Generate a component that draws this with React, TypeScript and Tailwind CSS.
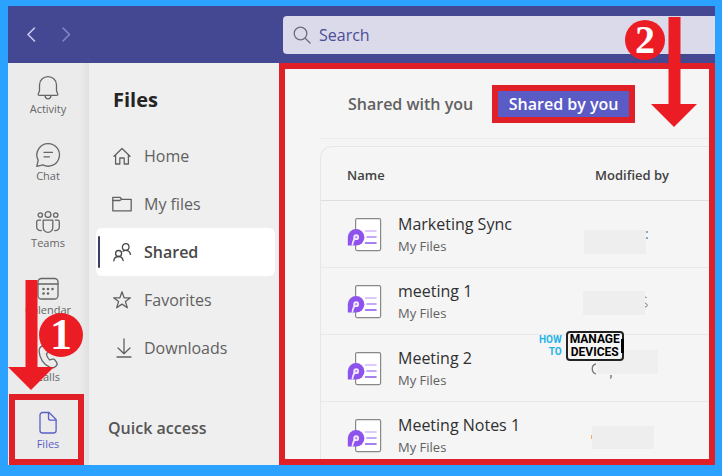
import type { ReactNode } from "react";

const FONT = "font-['Open_Sans','Noto_Sans',sans-serif]";

type Entry = { label: string; icon: ReactNode };

function Icon({ children, size = 24 }: { children: ReactNode; size?: number }) {
  return (
    <svg
      width={size}
      height={size}
      viewBox={`0 0 ${size} ${size}`}
      fill="none"
      stroke="currentColor"
      strokeWidth="1.3"
      strokeLinecap="round"
      strokeLinejoin="round"
      aria-hidden="true"
      className="shrink-0 overflow-visible"
    >
      {children}
    </svg>
  );
}

const rail: Entry[] = [
  {
    label: "Activity",
    icon: (
      <Icon size={26}>
        <path d="M4.4 20.4c-1 0-1.500-.8-1.100-1.700l1.200-3V10c0-4.700 3.700-8.300 8.500-8.300s8.500 3.600 8.500 8.300v5.700l1.200 3c.4.9-.1 1.700-1.100 1.700z" />
        <path d="M10 20.600c.2 1.900 1.400 3.200 3 3.200s2.800-1.300 3-3.200" />
      </Icon>
    ),
  },
  {
    label: "Chat",
    icon: (
      <Icon size={26}>
        <path d="M13.200 1.600a11.300 11.300 0 1 1-5.300 21.300L1.800 24.300l1.400-6.100A11.300 11.300 0 0 1 13.200 1.600z" />
        <path d="M9 10.300h8.500M9 14.800h5.500" />
      </Icon>
    ),
  },
  {
    label: "Teams",
    icon: (
      <Icon size={26}>
        <circle cx="13" cy="5.500" r="2.900" />
        <circle cx="5.300" cy="6" r="2.200" />
        <circle cx="20.700" cy="6" r="2.200" />
        <path d="M8.200 11.200h9.600v7.300a4.800 4.800 0 0 1-9.600 0z" />
        <path d="M5.600 11.200H3.400c-1 0-1.700.7-1.700 1.700v5a3.700 3.700 0 0 0 4.500 3.600M20.400 11.200h2.200c1 0 1.700.7 1.700 1.700v5a3.700 3.700 0 0 1-4.500 3.600" />
      </Icon>
    ),
  },
  {
    label: "Calendar",
    icon: (
      <Icon size={26}>
        <rect x="3" y="2.500" width="20" height="20.500" rx="3.500" />
        <path d="M3 8h20" />
        <g fill="currentColor" stroke="none">
          <circle cx="8.500" cy="13" r="1.300" />
          <circle cx="13" cy="13" r="1.300" />
          <circle cx="17.500" cy="13" r="1.300" />
          <circle cx="8.500" cy="17.500" r="1.300" />
          <circle cx="13" cy="17.500" r="1.300" />
        </g>
      </Icon>
    ),
  },
  {
    label: "Calls",
    icon: (
      <Icon size={26}>
        <path d="M7.700 2.800 10 2.100c1.300-.4 2.500.3 3 1.500l1 2.500c.4 1 .1 2-.6 2.800l-2 1.900c.2 2.300 1.600 4.700 3.300 6.200l2.700-.8c1-.3 2.100.1 2.700 1l1.500 2.100c.8 1.100.7 2.500-.3 3.400l-.8.700c-1.500 1.400-3.600 1.900-5.500 1C8.500 21.700 4.500 15 4.100 8.200c-.1-2.500 1.300-4.700 3.600-5.400z" />
      </Icon>
    ),
  },
  {
    label: "Files",
    icon: (
      <Icon size={26}>
        <path d="M7.500 2.500h6.600l7 7v11c0 1.600-1 2.500-2.500 2.500H7.500C6 23 5 22.100 5 20.500V5c0-1.600 1-2.500 2.500-2.500z" />
        <path d="M13.500 2.800v5.100c0 1.500.8 2.300 2.300 2.300h5" />
      </Icon>
    ),
  },
];

const folders: Entry[] = [
  {
    label: "Home",
    icon: (
      <Icon size={20}>
        <path d="M2 10.300 10 2.500l8 7.800M3.600 9V18h4.200v-6h4.400v6h4.200V9" />
      </Icon>
    ),
  },
  {
    label: "My files",
    icon: (
      <Icon size={20}>
        <path d="M.8 3.300h7l2 2h9.400v11.500H.8z" />
        <path d="M.8 6.500h7l2-1.200" />
      </Icon>
    ),
  },
  {
    label: "Shared",
    icon: (
      <Icon size={20}>
        <circle cx="13.700" cy="5" r="3.300" />
        <circle cx="6.600" cy="11.500" r="3" />
        <path d="M1.800 18.800c.3-2.500 2.200-4.300 4.800-4.300 2.300 0 4.100 1.600 4.500 4M11 9.200c.8-.6 1.700-.9 2.700-.9 2.500 0 4.300 1.600 4.700 4" />
      </Icon>
    ),
  },
  {
    label: "Favorites",
    icon: (
      <Icon size={20}>
        <path d="m10 1.800 2.100 6h6.300l-5 3.800 1.900 6.200-5.300-3.700-5.300 3.700 1.900-6.200-5-3.800h6.300z" />
      </Icon>
    ),
  },
  {
    label: "Downloads",
    icon: (
      <Icon size={20}>
        <path d="M12 1v14.500M6 10l6 5.700 6-5.700M5 19h14" />
      </Icon>
    ),
  },
];

/* Hidden author names: a grey patch with what still shows round its edge. */
const files: { name: string; author: ReactNode }[] = [
  {
    name: "Marketing Sync",
    author: (
      <>
        <path fill="#eeeeee" d="M1 29h62v24H1z" />
        <path fill="#8aa6c8" d="M63 30h2v2h-2zM63 36h2v2h-2z" />
      </>
    ),
  },
  {
    name: "meeting 1",
    author: (
      <>
        <path fill="#eeeeee" d="M0 23h62v24H0z" />
        <path d="M62 29c1 0 2 1 2 1M62 35c3 1 3 4 0 4" stroke="#6b7684" fill="none" />
      </>
    ),
  },
  {
    name: "Meeting 2",
    author: (
      <>
        <path fill="#efefef" d="M14 15h61v24H14z" />
        <path d="M13 29c-5 1-5 8 0 10" stroke="#777777" fill="none" strokeWidth="1.300" />
        <path d="M27 40h2v2l-1 2h-1z" fill="#999999" />
      </>
    ),
  },
  {
    name: "Meeting Notes 1",
    author: (
      <>
        <path fill="#eeeeee" d="M9 24h62v23H9z" />
        <path fill="#efb160" d="M8 33h1v4H8z" />
      </>
    ),
  },
];

function LoopIcon() {
  return (
    <svg width="36" height="36" viewBox="0 0 36 36" aria-hidden="true" className="shrink-0">
      <rect x="8.600" y="2.600" width="25" height="32" rx="1.500" fill="#ffffff" stroke="#8a8886" strokeWidth="1.200" />
      <path d="M18.500 15h10.500" stroke="#d3b9fb" strokeWidth="1.600" strokeLinecap="round" />
      <path d="M20 21h9" stroke="#b18bf5" strokeWidth="1.600" strokeLinecap="round" />
      <path d="M18.500 27h10.500" stroke="#8b57ea" strokeWidth="1.600" strokeLinecap="round" />
      <path d="M.8 29.500V21.300A8.300 8.300 0 1 1 9.100 29.600z" fill="#8e53ec" />
      <path d="M9.200 18.300a2.900 2.900 0 0 1 0 5.800H8c-.9 1.600-1.500 3.200-1.800 5.400H4.600c.2-3 1.100-5.200 1.700-6.500v-1.800a2.900 2.900 0 0 1 2.900-2.900z" fill="#f1e8ff" />
      <circle cx="9.200" cy="21.200" r="1.100" fill="#b18bf5" />
    </svg>
  );
}

function DownArrow() {
  return (
    <svg width="46" height="110" viewBox="0 0 46 110" aria-hidden="true" className="block">
      <path d="M17.500 0h12v87H46L23 110 0 87h17.500z" fill="#ec1c24" />
    </svg>
  );
}

export default function App() {
  return (
    <div className={`relative flex h-screen min-h-[476px] flex-col overflow-hidden bg-[#2ba2ff] pt-1.5 pr-[7px] pb-[11px] pl-2 text-[#616161] ${FONT}`}>
      <header className="flex h-[57px] shrink-0 items-center bg-[#444791]">
        <div className="flex w-[275px] shrink-0 gap-5 pl-4">
          <button aria-label="Back" className="text-[#c9caf0]">
            <Icon size={15}>
              <path d="M10.500 1 4 7.500l6.500 6.500" strokeWidth="1.600" />
            </Icon>
          </button>
          <button aria-label="Forward" className="text-[#8385c6]">
            <Icon size={15}>
              <path d="M4 1l6.500 6.500L4 14" strokeWidth="1.600" />
            </Icon>
          </button>
        </div>
        <label className="flex h-[38px] min-w-0 flex-1 items-center gap-2 rounded-l bg-[#dbdaea] pl-2.5 text-[#6c6b80]">
          <Icon size={18}>
            <circle cx="7.500" cy="7.500" r="6.300" />
            <path d="m12.200 12.200 4.800 4.800" />
          </Icon>
          <input
            type="search"
            aria-label="Search"
            placeholder="Search"
            className="min-w-0 flex-1 bg-transparent text-base text-[#444791] outline-none placeholder:text-[#4b4d97] placeholder:opacity-100"
          />
        </label>
      </header>

      <div className="flex min-h-0 flex-1">
        <nav aria-label="Apps" className="w-[81px] shrink-0 bg-[linear-gradient(to_right,#ebebeb_72px,#e0e0e0)]">
          <ul>
            {rail.map(({ label, icon }) => (
              <li key={label} className="relative h-[67px]">
                <button
                  className={`flex h-full w-20 flex-col items-center pt-3 text-[11px] leading-4 ${
                    label === "Files" ? "text-[#5b5fc7]" : "text-[#666666]"
                  }`}
                >
                  {icon}
                  {label}
                </button>
                {label === "Files" && (
                  <span className="pointer-events-none absolute -top-1 bottom-0 left-px w-[75px] border-6 border-[#e01f27]" />
                )}
              </li>
            ))}
          </ul>
        </nav>

        <nav aria-label="Files" className="w-[190px] shrink-0 bg-[#efefef] px-1 pl-[7px]">
          <h1 className="flex h-[69px] items-center pt-1 pl-[17px] text-xl font-bold text-[#242424]">Files</h1>
          <ul>
            {folders.map(({ label, icon }) => (
              <li key={label}>
                <button
                  className={`relative flex h-12 w-full items-center gap-3 rounded-md pb-px pl-4 text-base ${
                    label === "Shared" ? "bg-white font-semibold text-[#484848]" : ""
                  }`}
                >
                  {label === "Shared" && <span className="absolute left-0.5 h-8 w-0.5 rounded bg-[#3d3e66]" />}
                  {icon}
                  {label}
                </button>
              </li>
            ))}
          </ul>
          <h2 className="pt-11 pl-3 text-base leading-6 font-semibold text-[#555555]">Quick access</h2>
        </nav>

        <main className="min-w-0 flex-1 overflow-hidden border-6 border-[#e01f27] bg-[#f5f5f5]">
          <div role="tablist" className="flex h-[69px] items-center gap-[19px] pl-[63px]">
            <button role="tab" aria-selected="false" className="text-base font-semibold whitespace-nowrap">
              Shared with you
            </button>
            <button
              role="tab"
              aria-selected="true"
              className="h-[38px] w-[143px] border-6 border-[#e01f27] bg-[#5b5bc5] text-base leading-6 font-semibold whitespace-nowrap text-white"
            >
              Shared by you
            </button>
          </div>
          <div className="ml-[35px] h-2 border-t border-[#ececec]" />
          <div className="ml-[35px] rounded-tl-xl border-t border-l border-[#e6e6e6]">
            <table className="w-full table-fixed border-collapse text-left">
              <thead>
                <tr className="h-[53px] border-b border-[#dedede] text-[13px] text-[#424242]">
                  <th className="w-[262px] pt-1 pl-[26px] font-semibold">Name</th>
                  <th className="pt-1 pl-3 font-semibold">Modified by</th>
                </tr>
              </thead>
              <tbody>
                {files.map(({ name, author }) => (
                  <tr key={name} className="h-[67px] border-b border-[#e8e8e8]">
                    <td className="p-0 pl-[26px]">
                      <div className="flex items-center gap-[15px]">
                        <LoopIcon />
                        <div className="whitespace-nowrap">
                          <div className="text-base leading-6 text-[#303030]">{name}</div>
                          <div className="text-[13px] leading-5">My Files</div>
                        </div>
                      </div>
                    </td>
                    <td className="p-0">
                      <svg width="80" height="66" viewBox="0 0 80 66" role="img" aria-label="Name hidden" className="block">
                        {author}
                      </svg>
                    </td>
                  </tr>
                ))}
              </tbody>
            </table>
          </div>
        </main>
      </div>

      {/* Watermark */}
      <div className="absolute top-[331px] left-[539px] flex items-center gap-1 font-['Roboto','Liberation_Sans',sans-serif] font-bold">
        <div className="text-right text-[10px] leading-[12px] text-[#1fb4e8]">
          HOW
          <br />
          TO
        </div>
        <div className="relative h-[30px] w-[58px] rounded border-2 border-[#222222] bg-[#f5f5f5] text-center text-[12px] leading-[13px] text-black">
          MANAGE
          <br />
          DEVICES
          <span className="absolute top-1.5 -right-0.5 h-3.5 w-[3px] bg-black" />
        </div>
      </div>

      {/* Step markers */}
      <div className="absolute top-[280px] left-2">
        <DownArrow />
      </div>
      <div className="absolute top-[313px] left-[39px] flex size-11 items-center justify-center rounded-full bg-[#ec1c24] font-['Liberation_Serif',serif] text-[44px] leading-none font-bold text-white">
        1
      </div>
      <div className="absolute top-[17px] right-[25px]">
        <DownArrow />
      </div>
      <div className="absolute top-5 right-[57px] flex size-10 items-center justify-center rounded-full bg-[#ec1c24] font-['Liberation_Serif',serif] text-[40px] leading-none font-bold text-white">
        2
      </div>
    </div>
  );
}
